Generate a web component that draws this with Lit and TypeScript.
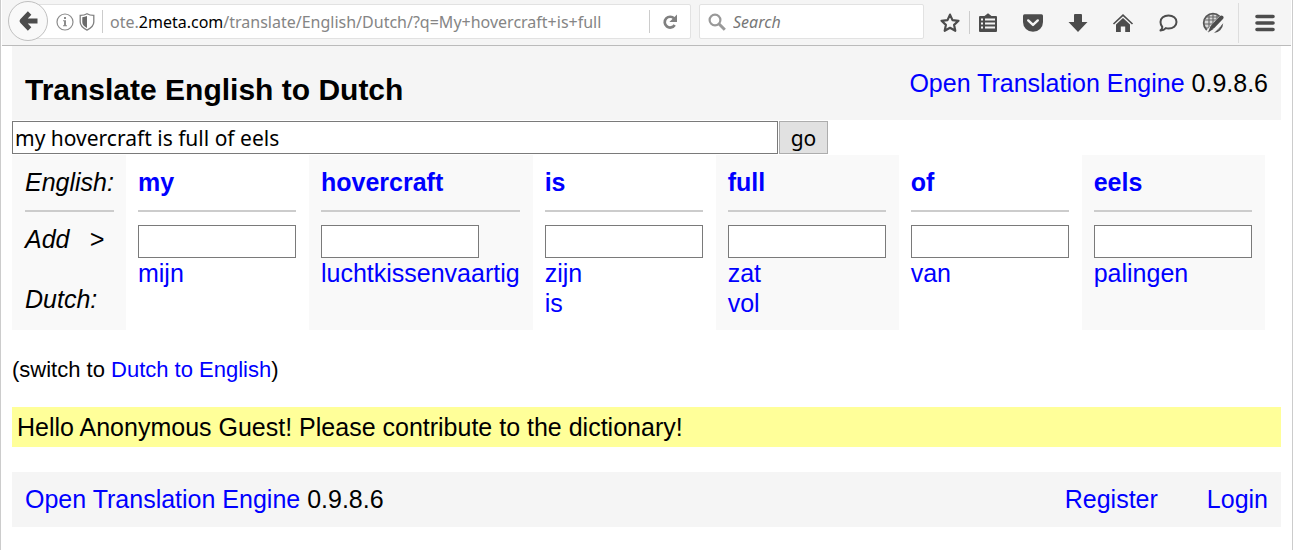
import { LitElement, html, svg, css } from "lit";
import { customElement, property, state } from "lit/decorators.js";
import { classMap } from "lit/directives/class-map.js";

interface Entry {
  word: string;
  translations: string[];
}

const ENTRIES: Entry[] = [
  { word: "my", translations: ["mijn"] },
  { word: "hovercraft", translations: ["luchtkissenvaartig"] },
  { word: "is", translations: ["zijn", "is"] },
  { word: "full", translations: ["zat", "vol"] },
  { word: "of", translations: ["van"] },
  { word: "eels", translations: ["palingen"] },
];

const ICONS = {
  back: svg`<path d="M12.600 3 5 11l7.600 8M6 11h14.500" fill="none" stroke="#4c4c4c" stroke-width="4.800" stroke-linejoin="round"/>`,
  info: svg`<circle cx="11" cy="11" r="8" fill="none" stroke="#8c8c8c" stroke-width="1.2"/><path d="M9 9.300h3v5h1v1H9v-1h1v-4H9zM10 6h2v2h-2z" fill="#8c8c8c"/>`,
  shield: svg`<path d="M11 2.800c-2 1.200-4.200 1.600-6.800 1.600v6.700c0 3.700 3 6.200 6.800 8 3.800-1.800 6.800-4.300 6.800-8V4.400c-2.600 0-4.800-.4-6.800-1.600z" fill="none" stroke="#808080" stroke-width="1.300"/><path d="M11 5c-1.500.7-3 1.100-4.700 1.200v5.100c0 2.400 1.900 4.200 4.700 5.600z" fill="#6a6a6a"/>`,
  reload: svg`<path d="M15.200 7.600A5.400 5.400 0 1 0 15.700 14" fill="none" stroke="#808080" stroke-width="2.700"/><path d="M18 3.600v7.400h-7.600z" fill="#808080"/>`,
  search: svg`<circle cx="9" cy="9" r="5.400" fill="none" stroke="#999" stroke-width="2.200"/><path d="m12.800 12.800 6 6" stroke="#999" stroke-width="3"/>`,
  star: svg`<path d="m11 2.600 2.500 5.500 6 .7-4.400 4.100 1.200 5.900-5.300-3-5.300 3 1.200-5.900-4.400-4.100 6-.7z" fill="none" stroke="#4c4c4c" stroke-width="2.200" stroke-linejoin="round"/>`,
  list: svg`<path d="M3 4h4.500L11 1.200 14.500 4H19q1 0 1 1v14q0 1-1 1H3q-1 0-1-1V5q0-1 1-1z" fill="#4c4c4c"/><path d="M8 7.500h10M8 11.500h10M8 15.500h10" stroke="#f5f5f5" stroke-width="2"/><path d="M4 7.500h2M4 11.500h2M4 15.500h2" stroke="#f5f5f5" stroke-width="2"/>`,
  pocket: svg`<path d="M2.500 2.200h17q1.500 0 1.500 1.500v6.300a10 9.800 0 0 1-20 0V3.700q0-1.500 1.500-1.500z" fill="#4c4c4c"/><path d="m6.200 8.400 4.800 4.500 4.800-4.500" fill="none" stroke="#f5f5f5" stroke-width="2.400" stroke-linecap="round" stroke-linejoin="round"/>`,
  download: svg`<path d="M8 2h6q1 0 1 1v7h5.500L11 20 1.500 10H7V3q0-1 1-1z" fill="#4c4c4c"/>`,
  home: svg`<path d="M1.500 12 11 3.200l9.500 8.800" fill="none" stroke="#4c4c4c" stroke-width="1.600"/><path d="M4 12.400 11 6l7 6.400v7.600h-4.800v-5.500H8.800V20H4z" fill="#4c4c4c"/>`,
  chat: svg`<path d="M11.500 3.500c4.600 0 8 2.700 8 6.500s-3.400 6.500-8 6.500c-1 0-1.900-.1-2.700-.4-1.200 1.400-3 2.200-5.300 2.300 1.200-.9 1.800-2 1.800-3.400C4.200 13.800 3.500 12 3.500 10c0-3.800 3.400-6.500 8-6.500z" fill="none" stroke="#4c4c4c" stroke-width="2" stroke-linejoin="round"/>`,
  globe: svg`<circle cx="11" cy="11" r="9.300" fill="#d8d8d8" stroke="#555" stroke-width="1.800"/><path d="M2 8h18M2 12h18M4 16h14M7 3v16M11 2v18M15 3v16M5 5h12" stroke="#666" stroke-width="1.100"/><path d="M22 5 7 21" stroke="#f5f5f5" stroke-width="7.500"/><path d="m19.500 5.500-8.600 9" stroke="#4c4c4c" stroke-width="4" stroke-linecap="round"/><path d="m8.500 14 3 3-5.500 3.500z" fill="#4c4c4c"/>`,
  menu: svg`<path d="M3 4.500h16M3 11h16M3 17.500h16" stroke="#4c4c4c" stroke-width="3.600" stroke-linecap="round"/>`,
};

@customElement("ui-icon")
class UiIcon extends LitElement {
  static styles = css`
    :host { display: block; width: 22px; height: 22px; flex: none; }
    .glyph { display: block; width: 100%; height: 100%; }
  `;
  @property() name: keyof typeof ICONS = "menu";
  render() {
    return html`<svg class="glyph" viewBox="0 0 22 22" aria-hidden="true">${ICONS[this.name]}</svg>`;
  }
}

@customElement("browser-bar")
class BrowserBar extends LitElement {
  static styles = css`
    :host {
      display: flex;
      align-items: center;
      height: 45px;
      margin: 0 1px;
      background: #f5f5f5;
      border-bottom: 1px solid #bbb;
      font-family: "Noto Sans", "Open Sans", sans-serif;
      font-size: 16px;
    }
    button {
      display: flex;
      align-items: center;
      justify-content: center;
      flex: none;
      margin: 0;
      padding: 0;
      border: 0;
      background: none;
    }
    .back {
      position: relative;
      z-index: 1;
      width: 40px;
      height: 40px;
      margin: 0 0 3px 6px;
      background: #f9f9f9;
      border: 1px solid #c0c0c0;
      border-radius: 50%;
    }
    .address, .find {
      display: flex;
      align-items: center;
      box-sizing: border-box;
      height: 35px;
      margin-bottom: 2px;
      background: #fff;
      border: 1px solid #e2e2e2;
      border-radius: 2px;
    }
    .address { flex: 1; min-width: 0; margin-left: -20px; padding-left: 25px; }
    .rule { flex: none; width: 1px; height: 23px; background: #ccc; }
    .address .rule { margin-left: 4px; }
    .url {
      flex: 1;
      min-width: 0;
      margin-left: 7px;
      overflow: hidden;
      white-space: nowrap;
      color: #858585;
    }
    .host { color: #000; }
    .reload { width: 40px; height: 33px; }
    .find { width: 225px; margin-left: 8px; padding-left: 6px; gap: 5px; }
    .find input {
      flex: 1;
      min-width: 0;
      padding: 0;
      border: 0;
      outline: 0;
      background: none;
      font: inherit;
    }
    .find input::placeholder { color: #777; font-style: italic; opacity: 1; }
    .tools { display: flex; align-items: center; height: 45px; padding: 0 15px; }
    .tools button { width: 45px; height: 43px; }
    .tools .narrow { width: 22px; }
    .tools .star { width: 22px; margin-right: 8px; }
    .tools .list { width: 22px; margin: 0 11px 0 7px; }
    .tall { width: 1px; height: 40px; margin: 0 15px 0 3px; background: #ddd; }
  `;
  render() {
    return html`
      <button class="back" aria-label="Back"><ui-icon name="back"></ui-icon></button>
      <div class="address">
        <ui-icon name="info"></ui-icon>
        <ui-icon name="shield"></ui-icon>
        <span class="rule"></span>
        <span class="url">ote.<span class="host">2meta.com</span>/translate/English/Dutch/?q=My+hovercraft+is+full</span>
        <span class="rule"></span>
        <button class="reload" aria-label="Reload"><ui-icon name="reload"></ui-icon></button>
      </div>
      <label class="find">
        <ui-icon name="search"></ui-icon>
        <input type="search" placeholder="Search" aria-label="Search" />
      </label>
      <div class="tools">
        <button class="star" aria-label="Bookmark this page"><ui-icon name="star"></ui-icon></button>
        <span class="rule"></span>
        <button class="list" aria-label="Show bookmarks"><ui-icon name="list"></ui-icon></button>
        <button aria-label="Save to Pocket"><ui-icon name="pocket"></ui-icon></button>
        <button aria-label="Downloads"><ui-icon name="download"></ui-icon></button>
        <button aria-label="Home"><ui-icon name="home"></ui-icon></button>
        <button aria-label="Chat"><ui-icon name="chat"></ui-icon></button>
        <button aria-label="Web tools"><ui-icon name="globe"></ui-icon></button>
        <span class="tall"></span>
        <button class="narrow" aria-label="Menu"><ui-icon name="menu"></ui-icon></button>
      </div>
    `;
  }
}

@customElement("app-root")
class AppRoot extends LitElement {
  static styles = css`
    :host {
      display: block;
      box-sizing: border-box;
      min-height: 100vh;
      background: #fff;
      border: solid #ccc;
      border-width: 0 1px;
      color: #000;
      font: 25px/30px "Liberation Sans", Arial, sans-serif;
    }
    a { color: #00f; text-decoration: none; }
    .page { padding: 0 11px; }
    .head {
      display: flex;
      justify-content: space-between;
      padding: 22px 13px 12px;
      background: #f5f5f5;
    }
    .title { align-self: flex-end; margin: 0; padding-top: 4px; font-size: 30px; line-height: 36px; }
    .query { display: flex; gap: 1px; margin: 1px 0; }
    .field {
      box-sizing: border-box;
      height: 33px;
      padding: 0 2px;
      border: 1px solid #7a7a7a;
      border-radius: 0;
      background: #fff;
      color: #000;
      font: 21px "Noto Sans", "Open Sans", sans-serif;
    }
    .phrase { flex: 0 1 766px; min-width: 0; }
    .go {
      width: 49px;
      height: 33px;
      padding: 0;
      border: 1px solid #adadad;
      background: #e1e1e1;
      color: #000;
      font: 21px "Noto Sans", "Open Sans", sans-serif;
      line-height: 30px;
    }
    .words { border-collapse: collapse; white-space: nowrap; }
    .words th, .words td {
      padding: 0 13px 0 12px;
      text-align: left;
      vertical-align: top;
      font-weight: normal;
    }
    .words .label { padding: 0 12px 0 13px; font-style: italic; }
    .words .shade { background: #f9f9f9; }
    .words thead .top { padding-top: 12px; }
    .words tbody .top { padding-top: 13px; }
    .words tbody .label.top { padding-top: 12px; }
    .words .label.target { padding-top: 26px; }
    .words tbody tr:last-child > * { padding-bottom: 12px; }
    .term { padding-bottom: 13px; border-bottom: 2px solid #ccc; }
    .term a { font-weight: bold; }
    .add { display: block; width: 158px; }
    .option { display: block; }
    .arrow { margin-left: 20px; }
    .switch { margin: 27px 0 24px; font-size: 22px; line-height: 26px; }
    .notice { margin: 0 0 25px; padding: 5px; background: #ff9; }
    .foot {
      display: flex;
      justify-content: space-between;
      padding: 12px 13px 13px;
      background: #f5f5f5;
    }
    .account { display: flex; gap: 49px; }
  `;

  @state() private phrase = "my hovercraft is full of eels";

  private shade(index: number, extra = "") {
    return classMap({ shade: index % 2 === 1, [extra || "cell"]: true });
  }

  render() {
    return html`
      <browser-bar></browser-bar>
      <main class="page">
        <header class="head">
          <h1 class="title">Translate English to Dutch</h1>
          <div><a href="#">Open Translation Engine</a> 0.9.8.6</div>
        </header>
        <form class="query" @submit=${(e: Event) => e.preventDefault()}>
          <input
            class="field phrase"
            type="text"
            aria-label="Text to translate"
            .value=${this.phrase}
            @input=${(e: Event) => (this.phrase = (e.target as HTMLInputElement).value)}
          />
          <button class="go" type="submit">go</button>
        </form>
        <table class="words">
          <thead>
            <tr>
              <th class="label shade top" scope="row"><div class="term">English:</div></th>
              ${ENTRIES.map((entry, i) => html`
                <th class=${this.shade(i, "top")} scope="col">
                  <div class="term"><a href="#">${entry.word}</a></div>
                </th>`)}
            </tr>
          </thead>
          <tbody>
            <tr>
              <th class="label shade top" scope="row">Add<span class="arrow">&gt;</span></th>
              ${ENTRIES.map((entry, i) => html`
                <td class=${this.shade(i, "top")}>
                  <input class="field add" type="text" aria-label="Add a translation for ${entry.word}" />
                </td>`)}
            </tr>
            <tr>
              <th class="label shade target" scope="row">Dutch:</th>
              ${ENTRIES.map((entry, i) => html`
                <td class=${this.shade(i)}>
                  ${entry.translations.map((t) => html`<a class="option" href="#">${t}</a>`)}
                </td>`)}
            </tr>
          </tbody>
        </table>
        <p class="switch">(switch to <a href="#">Dutch to English</a>)</p>
        <p class="notice">Hello Anonymous Guest! Please contribute to the dictionary!</p>
        <footer class="foot">
          <div><a href="#">Open Translation Engine</a> 0.9.8.6</div>
          <nav class="account"><a href="#">Register</a><a href="#">Login</a></nav>
        </footer>
      </main>
    `;
  }
}
